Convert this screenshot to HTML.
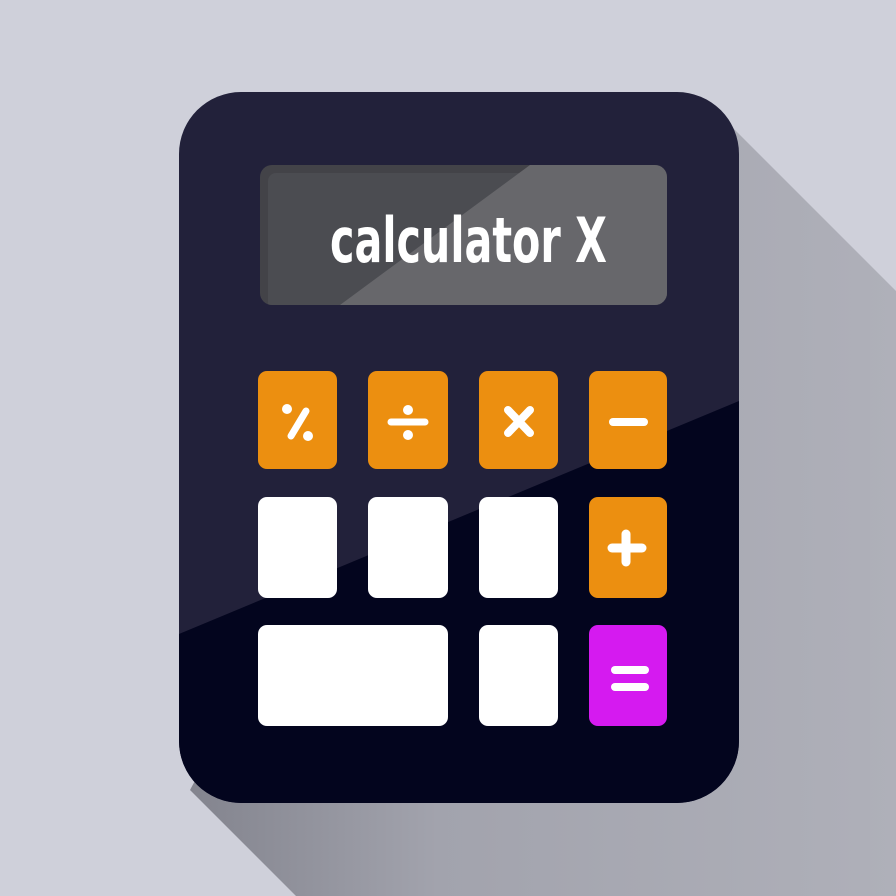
<!DOCTYPE html>
<html><head><style>html,body{margin:0;padding:0;background:#cfd0da;}svg{display:block}</style></head>
<body>
<svg width="896" height="896" viewBox="0 0 896 896" xmlns="http://www.w3.org/2000/svg">
<defs>
<linearGradient id="sh" x1="0" y1="0" x2="1" y2="0">
<stop offset="0" stop-color="#83848e"/><stop offset="0.35" stop-color="#a2a3ad"/><stop offset="1" stop-color="#afb0b9"/>
</linearGradient>
<clipPath id="body"><rect x="179" y="92" width="560" height="711" rx="62"/></clipPath>
<clipPath id="disp"><rect x="260" y="165" width="407" height="140" rx="12"/></clipPath>
</defs>
<rect width="896" height="896" fill="#cfd0da"/>
<polygon points="705,100 896,291 896,896 296,896 190,790 400,400" fill="url(#sh)"/>
<g clip-path="url(#body)">
<rect x="179" y="92" width="560" height="711" fill="#22213a"/>
<polygon points="179,634 739,401 739,803 179,803" fill="#03051e"/>
</g>
<g clip-path="url(#disp)">
<rect x="260" y="165" width="407" height="140" fill="#434348"/>
<rect x="268" y="173" width="400" height="140" rx="8" fill="#4b4c51"/>
<polygon points="530,165 667,165 667,305 340,305" fill="#67676b"/>
</g>
<text x="330" y="262" fill="#fff" font-family="'DejaVu Sans Condensed','DejaVu Sans','Liberation Sans',sans-serif" font-weight="bold" font-size="62" textLength="277" lengthAdjust="spacingAndGlyphs">calculator X</text>
<g fill="#ec8f10">
<rect x="258" y="371" width="79" height="98" rx="9"/>
<rect x="368" y="371" width="80" height="98" rx="9"/>
<rect x="479" y="371" width="79" height="98" rx="9"/>
<rect x="589" y="371" width="78" height="98" rx="9"/>
<rect x="589" y="497" width="78" height="101" rx="9"/>
</g>
<g fill="#fff">
<rect x="258" y="497" width="79" height="101" rx="9"/>
<rect x="368" y="497" width="80" height="101" rx="9"/>
<rect x="479" y="497" width="79" height="101" rx="9"/>
<rect x="258" y="625" width="190" height="101" rx="9"/>
<rect x="479" y="625" width="79" height="101" rx="9"/>
</g>
<rect x="589" y="625" width="78" height="101" rx="9" fill="#d51af0"/>
<g stroke="#fff" stroke-linecap="round" fill="none">
<line x1="306" y1="411" x2="291" y2="436" stroke-width="7"/>
<line x1="391" y1="422" x2="425" y2="422" stroke-width="7"/>
<line x1="508" y1="410" x2="530" y2="433" stroke-width="8"/>
<line x1="530" y1="410" x2="508" y2="433" stroke-width="8"/>
<line x1="613" y1="422" x2="644" y2="422" stroke-width="8"/>
<line x1="612" y1="548" x2="642" y2="548" stroke-width="9"/>
<line x1="626" y1="534" x2="626" y2="562" stroke-width="9"/>
<line x1="615" y1="670" x2="645" y2="670" stroke-width="8"/>
<line x1="615" y1="687" x2="645" y2="687" stroke-width="8"/>
</g>
<g fill="#fff">
<circle cx="287" cy="409" r="5"/><circle cx="308" cy="436" r="5"/>
<circle cx="408" cy="410" r="5"/><circle cx="408" cy="435" r="5"/>
</g>
</svg>
</body></html>
